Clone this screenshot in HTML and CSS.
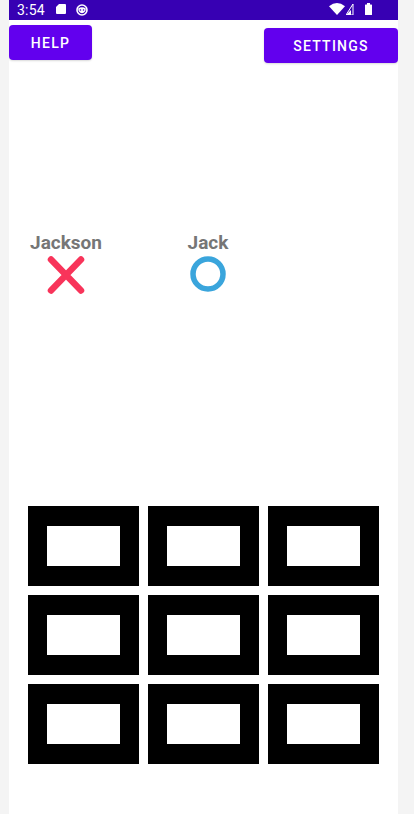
FILE: index.html
```html
<!DOCTYPE html>
<html>
<head>
<meta charset="utf-8">
<link rel="stylesheet" href="styles.css">
</head>
<body>
<div class="phone">
  <div class="status">
    <span class="time">3:54</span>
    <svg class="sd" width="10" height="10" viewBox="0 0 10 10"><path d="M3 0H9a1 1 0 0 1 1 1V9a1 1 0 0 1-1 1H1a1 1 0 0 1-1-1V3Z" fill="#fff"/></svg>
    <svg class="face" width="12" height="12" viewBox="0 0 12 12"><circle cx="6" cy="6" r="5" fill="none" stroke="#fff" stroke-width="1.6"/><path d="M2.2 4.5Q6 2 9.8 4.5Q9.6 8.8 6 9.2Q2.4 8.8 2.2 4.5Z" fill="#fff"/><circle cx="4.5" cy="6" r=".8" fill="#3700b3"/><circle cx="7.5" cy="6" r=".8" fill="#3700b3"/></svg>
    <span class="spacer"></span>
    <svg class="wifi" width="16" height="12" viewBox="0 0 16 12"><path d="M0 3.2Q8 -3 16 3.2L8 12Z" fill="#fff"/></svg>
    <svg class="signal" width="8" height="11" viewBox="0 0 8 11"><path d="M7 0V11H0Z" fill="none" stroke="#fff" stroke-width="1"/><path d="M7 0V11H0L5 6V11H7Z" fill="#fff"/></svg>
    <svg class="battery" width="7" height="12" viewBox="0 0 7 12"><rect x="2" y="0" width="3" height="2" fill="#fff"/><rect x="0" y="1.5" width="7" height="10.5" rx=".6" fill="#fff"/></svg>
  </div>
  <div class="buttons">
    <button class="btn help">HELP</button>
    <button class="btn settings">SETTINGS</button>
  </div>
  <div class="players">
    <div class="player">
      <div class="name">Jackson</div>
      <svg class="mark" width="38" height="40" viewBox="0 0 38 40"><path d="M4 4.5L34 35.5M34 4.5L4 35.5" stroke="#f8345a" stroke-width="6.5" stroke-linecap="round"/></svg>
    </div>
    <div class="player">
      <div class="name">Jack</div>
      <svg class="mark" width="38" height="40" viewBox="0 0 38 40"><circle cx="19" cy="19" r="15" fill="none" stroke="#3aa5dc" stroke-width="5.5"/></svg>
    </div>
  </div>
  <div class="board">
    <div class="cell"></div><div class="cell"></div><div class="cell"></div>
    <div class="cell"></div><div class="cell"></div><div class="cell"></div>
    <div class="cell"></div><div class="cell"></div><div class="cell"></div>
  </div>
</div>
</body>
</html>
```
FILE: styles.css
```css
html, body {
  margin: 0;
  padding: 0;
  background: #f4f4f4;
  font-family: Roboto, "Noto Sans", sans-serif;
}
.phone {
  margin-left: 9px;
  width: 389px;
  height: 814px;
  background: #ffffff;
  overflow: hidden;
}
.status {
  height: 20px;
  background: #3700b3;
  display: flex;
  align-items: center;
  padding: 0 26px 0 8px;
  color: #fff;
}
.time {
  font-size: 14px;
  letter-spacing: 0.2px;
  margin-right: 11px;
}
.sd { margin-right: 10px; margin-top: -2px; }
.face { margin-top: 0px; }
.spacer { flex: 1; }
.wifi { margin-right: 1px; margin-top: -2px; }
.signal { margin-right: 11px; margin-top: -2px; }
.battery { margin-top: -2px; }
.buttons {
  display: flex;
  justify-content: space-between;
  align-items: flex-start;
  height: 43px;
}
.btn {
  border: none;
  background: #6200ee;
  color: #fff;
  font-family: Roboto, sans-serif;
  font-weight: 500;
  font-size: 14px;
  letter-spacing: 1.25px;
  border-radius: 4px;
  height: 35px;
  padding: 0;
  box-shadow: 0 1px 2px rgba(0,0,0,0.15);
}
.help {
  width: 83px;
  margin-top: 5px;
}
.settings {
  width: 134px;
  margin-top: 8px;
}
.players {
  display: flex;
  gap: 52px;
  padding-left: 12px;
  margin-top: 168px;
}
.player {
  width: 90px;
  display: flex;
  flex-direction: column;
  align-items: center;
}
.name {
  font-size: 19px;
  font-weight: 700;
  color: #767676;
  line-height: 24px;
}
.mark {
  display: block;
  margin-top: 0;
}
.board {
  display: grid;
  grid-template-columns: repeat(3, 111px);
  grid-auto-rows: 80px;
  gap: 9px;
  margin-left: 19px;
  margin-top: 211px;
}
.cell {
  box-sizing: border-box;
  border-style: solid;
  border-color: #000;
  border-width: 20px 19px;
  background: #fff;
}
```
